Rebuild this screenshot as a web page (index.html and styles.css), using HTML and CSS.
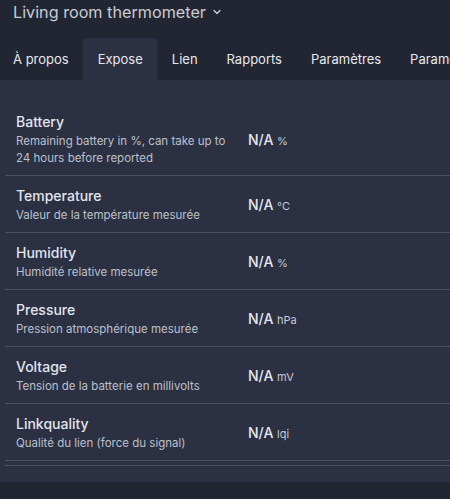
FILE: index.html
```html
<!DOCTYPE html>
<html lang="fr">
<head>
<meta charset="utf-8">
<link rel="stylesheet" href="styles.css">
</head>
<body>
<header class="head">
  <h1 class="title">Living room thermometer
    <svg class="chev" width="8" height="6" viewBox="0 0 8 6"><path d="M1 1.5 L4 4.5 L7 1.5" fill="none" stroke="#c9ccd4" stroke-width="1.4" stroke-linecap="round" stroke-linejoin="round"/></svg>
  </h1>
</header>
<nav class="tabs">
  <span class="tab">À propos</span>
  <span class="tab active">Expose</span>
  <span class="tab">Lien</span>
  <span class="tab">Rapports</span>
  <span class="tab">Paramètres</span>
  <span class="tab">Paramètres spécifiques</span>
</nav>
<main class="panel">
  <div class="row">
    <div class="info"><div class="name">Battery</div><div class="desc">Remaining battery in %, can take up to 24 hours before reported</div></div>
    <div class="val">N/A <span class="unit">%</span></div>
  </div>
  <div class="row">
    <div class="info"><div class="name">Temperature</div><div class="desc">Valeur de la température mesurée</div></div>
    <div class="val">N/A <span class="unit">°C</span></div>
  </div>
  <div class="row">
    <div class="info"><div class="name">Humidity</div><div class="desc">Humidité relative mesurée</div></div>
    <div class="val">N/A <span class="unit">%</span></div>
  </div>
  <div class="row">
    <div class="info"><div class="name">Pressure</div><div class="desc">Pression atmosphérique mesurée</div></div>
    <div class="val">N/A <span class="unit">hPa</span></div>
  </div>
  <div class="row">
    <div class="info"><div class="name">Voltage</div><div class="desc">Tension de la batterie en millivolts</div></div>
    <div class="val">N/A <span class="unit">mV</span></div>
  </div>
  <div class="row">
    <div class="info"><div class="name">Linkquality</div><div class="desc">Qualité du lien (force du signal)</div></div>
    <div class="val">N/A <span class="unit">lqi</span></div>
  </div>
  <div class="endline"></div>
</main>
</body>
</html>
```
FILE: styles.css
```css
html, body {
  margin: 0;
  padding: 0;
  background: #222632;
  font-family: Inter, "Noto Sans", sans-serif;
  color: #e2e5ec;
  overflow: hidden;
  width: 450px;
  height: 499px;
}
.head {
  height: 38px;
  padding-left: 13px;
}
.title {
  margin: 0;
  font-size: 16.2px;
  font-weight: 400;
  line-height: 24px;
  color: #c9ccd4;
  white-space: nowrap;
  display: flex;
  align-items: center;
  gap: 7px;
}
.tabs {
  display: flex;
  height: 42px;
  white-space: nowrap;
}
.tab {
  flex: none;
  display: flex;
  align-items: center;
  padding: 0 14.5px;
  font-size: 13px;
  color: #e6e8ee;
  border-radius: 4px 4px 0 0;
}
.tab:first-child {
  padding-left: 13px;
}
.tab.active {
  background: #2b3043;
}
.panel {
  background: #2b3043;
  height: 402px;
  padding: 22px 0 0 5px;
  box-sizing: border-box;
}
.row {
  display: grid;
  grid-template-columns: 232px 1fr;
  align-items: center;
  padding: 9px 0 8px 11px;
  border-bottom: 1px solid #4a4f61;
}
.name {
  font-size: 14px;
  line-height: 21px;
  font-weight: 500;
  color: #e2e5ec;
}
.desc {
  margin-top: 1px;
  font-size: 11.5px;
  line-height: 17px;
  color: #bcc0ca;
  padding-right: 12px;
}
.val {
  font-size: 14px;
  font-weight: 500;
  color: #e6e8ee;
}
.unit {
  font-size: 11px;
  font-weight: 400;
  color: #c6c9d2;
}
.endline {
  margin-top: 4px;
  border-top: 1px solid #4a4f61;
}
```
